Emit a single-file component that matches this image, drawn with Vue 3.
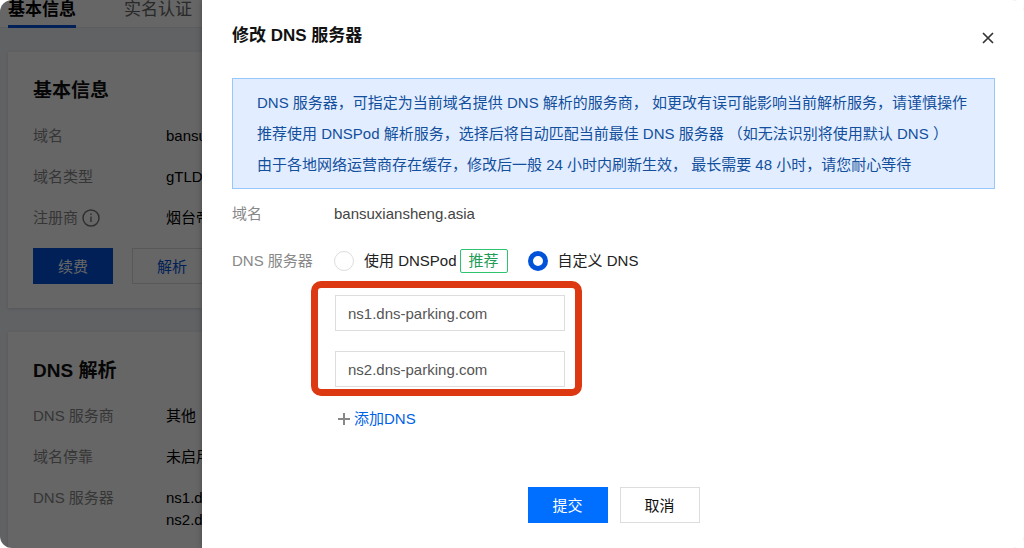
<script setup>
import { ref } from 'vue'

const mode = ref('custom')
const servers = ref(['ns1.dns-parking.com', 'ns2.dns-parking.com'])

const notices = [
  'DNS 服务器，可指定为当前域名提供 DNS 解析的服务商， 如更改有误可能影响当前解析服务，请谨慎操作',
  '推荐使用 DNSPod 解析服务，选择后将自动匹配当前最佳 DNS 服务器 （如无法识别将使用默认 DNS ）',
  '由于各地网络运营商存在缓存，修改后一般 24 小时内刷新生效， 最长需要 48 小时，请您耐心等待',
]
</script>

<template>
  <div class="app">
    <main class="page">
      <nav class="tabs">
        <a class="tab active" href="#basic">基本信息</a>
        <a class="tab" href="#verify">实名认证</a>
      </nav>

      <div class="cards">
        <section class="card">
          <h2>基本信息</h2>
          <dl class="info">
            <dt>域名</dt>
            <dd>bansuxiansheng.asia</dd>
            <dt>域名类型</dt>
            <dd>gTLD</dd>
            <dt>
              注册商
              <svg class="info-icon" viewBox="0 0 18 18" aria-hidden="true">
                <circle cx="9" cy="9" r="8" fill="none" stroke="currentColor" stroke-width="1.5" />
                <path d="M9 7.5V13M9 4.6V6.1" stroke="currentColor" stroke-width="1.4" />
              </svg>
            </dt>
            <dd>烟台帝</dd>
          </dl>
          <div class="card-actions">
            <button type="button" class="btn renew">续费</button>
            <button type="button" class="btn resolve">解析</button>
          </div>
        </section>

        <section class="card">
          <h2>DNS 解析</h2>
          <dl class="info">
            <dt>DNS 服务商</dt>
            <dd>其他</dd>
            <dt>域名停靠</dt>
            <dd>未启用</dd>
            <dt>DNS 服务器</dt>
            <dd>
              <div v-for="server in servers" :key="server">{{ server }}</div>
            </dd>
          </dl>
        </section>
      </div>
      <div class="mask"></div>
    </main>

    <aside class="drawer" role="dialog" aria-labelledby="drawer-title">
      <header class="drawer-head">
        <h1 id="drawer-title">修改 DNS 服务器</h1>
        <button type="button" class="close" aria-label="关闭">
          <svg viewBox="0 0 12 12" aria-hidden="true">
            <path d="M1 1L11 11M11 1L1 11" stroke="currentColor" stroke-width="1.7" />
          </svg>
        </button>
      </header>

      <div class="notice">
        <p v-for="line in notices" :key="line">{{ line }}</p>
      </div>

      <form class="form" @submit.prevent>
        <div class="row">
          <span class="label">域名</span>
          <span class="value">bansuxiansheng.asia</span>
        </div>
        <div class="row modes" role="radiogroup" aria-labelledby="dns-label">
          <span id="dns-label" class="label">DNS 服务器</span>
          <label class="mode">
            <input v-model="mode" type="radio" name="mode" value="dnspod" />
            <span>使用 DNSPod</span>
          </label>
          <span class="tag">推荐</span>
          <label class="mode">
            <input v-model="mode" type="radio" name="mode" value="custom" />
            <span>自定义 DNS</span>
          </label>
        </div>

        <div class="servers">
          <input
            v-for="(server, i) in servers"
            :key="i"
            v-model="servers[i]"
            type="text"
            class="server"
            :aria-label="`DNS 服务器 ${i + 1}`"
          />
        </div>

        <button type="button" class="add">
          <svg viewBox="0 0 12 12" aria-hidden="true">
            <path d="M6 0V12M0 6H12" stroke="#888" stroke-width="2" />
          </svg>
          添加DNS
        </button>

        <footer class="actions">
          <button type="submit" class="btn submit">提交</button>
          <button type="button" class="btn cancel">取消</button>
        </footer>
      </form>
    </aside>
  </div>
</template>

<style>
body {
  background: #fff;
}
</style>

<style scoped>
* {
  box-sizing: border-box;
}

.app {
  display: grid;
  grid-template-columns: 202px 1fr;
  height: 100vh;
  overflow: hidden;
  border-radius: 12px;
  font-family: "Liberation Sans", "Noto Sans CJK SC", sans-serif;
  font-size: 15px;
  line-height: 22px;
  color: #000;
}

button,
input {
  margin: 0;
  font: inherit;
}

button {
  padding: 0;
  cursor: pointer;
}

h1,
h2,
p,
dl,
dd {
  margin: 0;
}

.page {
  position: relative;
  overflow: hidden;
  background: #f1f4f8;
  white-space: nowrap;
}

.tabs {
  display: flex;
  gap: 48px;
  height: 28px;
  padding-left: 8px;
  background: #fff;
  border-bottom: 1px solid #e4e8ee;
}

.tab {
  height: 28px;
  padding-bottom: 6px;
  font-size: 17px;
  line-height: 20px;
  color: #666;
  text-decoration: none;
}

.tab.active {
  font-weight: 700;
  color: #000;
  border-bottom: 3px solid #0052d9;
}

.cards {
  display: grid;
  gap: 24px;
  padding: 24px 0 24px 8px;
}

.card {
  min-width: 0;
  padding: 24px 0 24px 25px;
  background: #fff;
  box-shadow: 0 1px 3px rgba(0, 20, 60, 0.12);
}

.card h2 {
  margin-bottom: 20px;
  font-size: 19px;
  line-height: 29px;
  color: #111;
}

.info {
  display: grid;
  grid-template-columns: 133px minmax(0, 1fr);
  row-gap: 19px;
}

.info dt {
  display: flex;
  align-items: center;
  gap: 4px;
  height: 22px;
  color: #888;
}

.info dd {
  overflow: hidden;
}

.info-icon {
  width: 18px;
  height: 18px;
  color: #777;
}

.card-actions {
  display: flex;
  gap: 19px;
  margin-top: 19px;
}

.btn {
  flex-shrink: 0;
  width: 80px;
  height: 36px;
  padding-top: 2px;
  border: 1px solid #ddd;
  background: #fff;
}

.renew {
  background: #0052d9;
  border-color: #0052d9;
  color: #fff;
}

.resolve {
  color: #0052d9;
}

.mask {
  position: absolute;
  inset: 0;
  background: rgba(0, 0, 0, 0.6);
}

.drawer {
  position: relative;
  min-width: 0;
  padding: 24px 29px 24px 30px;
  overflow: auto;
  background: #fff;
  box-shadow: 0 0 6px rgba(0, 0, 0, 0.3);
}

.drawer-head {
  display: flex;
  align-items: flex-start;
  justify-content: space-between;
  margin-bottom: 30px;
}

.drawer-head h1 {
  font-size: 17px;
  line-height: 24px;
  color: #111;
}

.close {
  display: flex;
  padding: 8px 1px 4px;
  border: 0;
  background: none;
  color: #333;
}

.close svg {
  width: 12px;
  height: 12px;
}

.notice {
  padding: 8px 24px;
  border: 1px solid #97c7ff;
  background: #e2eeff;
  line-height: 31px;
  color: #134f9c;
}

.form {
  display: flex;
  flex-direction: column;
  padding-top: 14px;
}

.row {
  display: flex;
  align-items: center;
  min-height: 22px;
}

.label {
  width: 102px;
  color: #888;
}

.value {
  color: #444;
}

.modes {
  margin-top: 24px;
}

.mode {
  display: flex;
  align-items: center;
  gap: 10px;
  color: #222;
}

.mode input {
  width: 20px;
  height: 20px;
  appearance: none;
  border: 1px solid #ddd;
  border-radius: 50%;
  background: #fff;
}

.mode input:checked {
  border: 5px solid #0052d9;
}

.tag {
  margin: 0 20px 0 3px;
  padding: 0 8px;
  border: 1px solid #2fc36f;
  border-radius: 2px;
  color: #1f9d57;
}

.servers {
  display: grid;
  align-self: flex-start;
  gap: 20px;
  margin: 8px 0 0 79px;
  padding: 7px 10px 2px 17px;
  border: 7px solid #dc3912;
  border-radius: 10px;
}

.server {
  width: 230px;
  height: 36px;
  padding: 0 12px;
  border: 1px solid #ddd;
  background: #fff;
  color: #555;
}

.add {
  display: flex;
  align-self: flex-start;
  align-items: center;
  gap: 4px;
  margin: 12px 0 0 106px;
  border: 0;
  background: none;
  color: #0062e6;
}

.add svg {
  width: 12px;
  height: 12px;
}

.actions {
  display: flex;
  justify-content: center;
  gap: 12px;
  margin-top: 57px;
}

.submit {
  border-color: #006eff;
  background: #006eff;
  color: #fff;
}

.cancel {
  color: #111;
}
</style>
